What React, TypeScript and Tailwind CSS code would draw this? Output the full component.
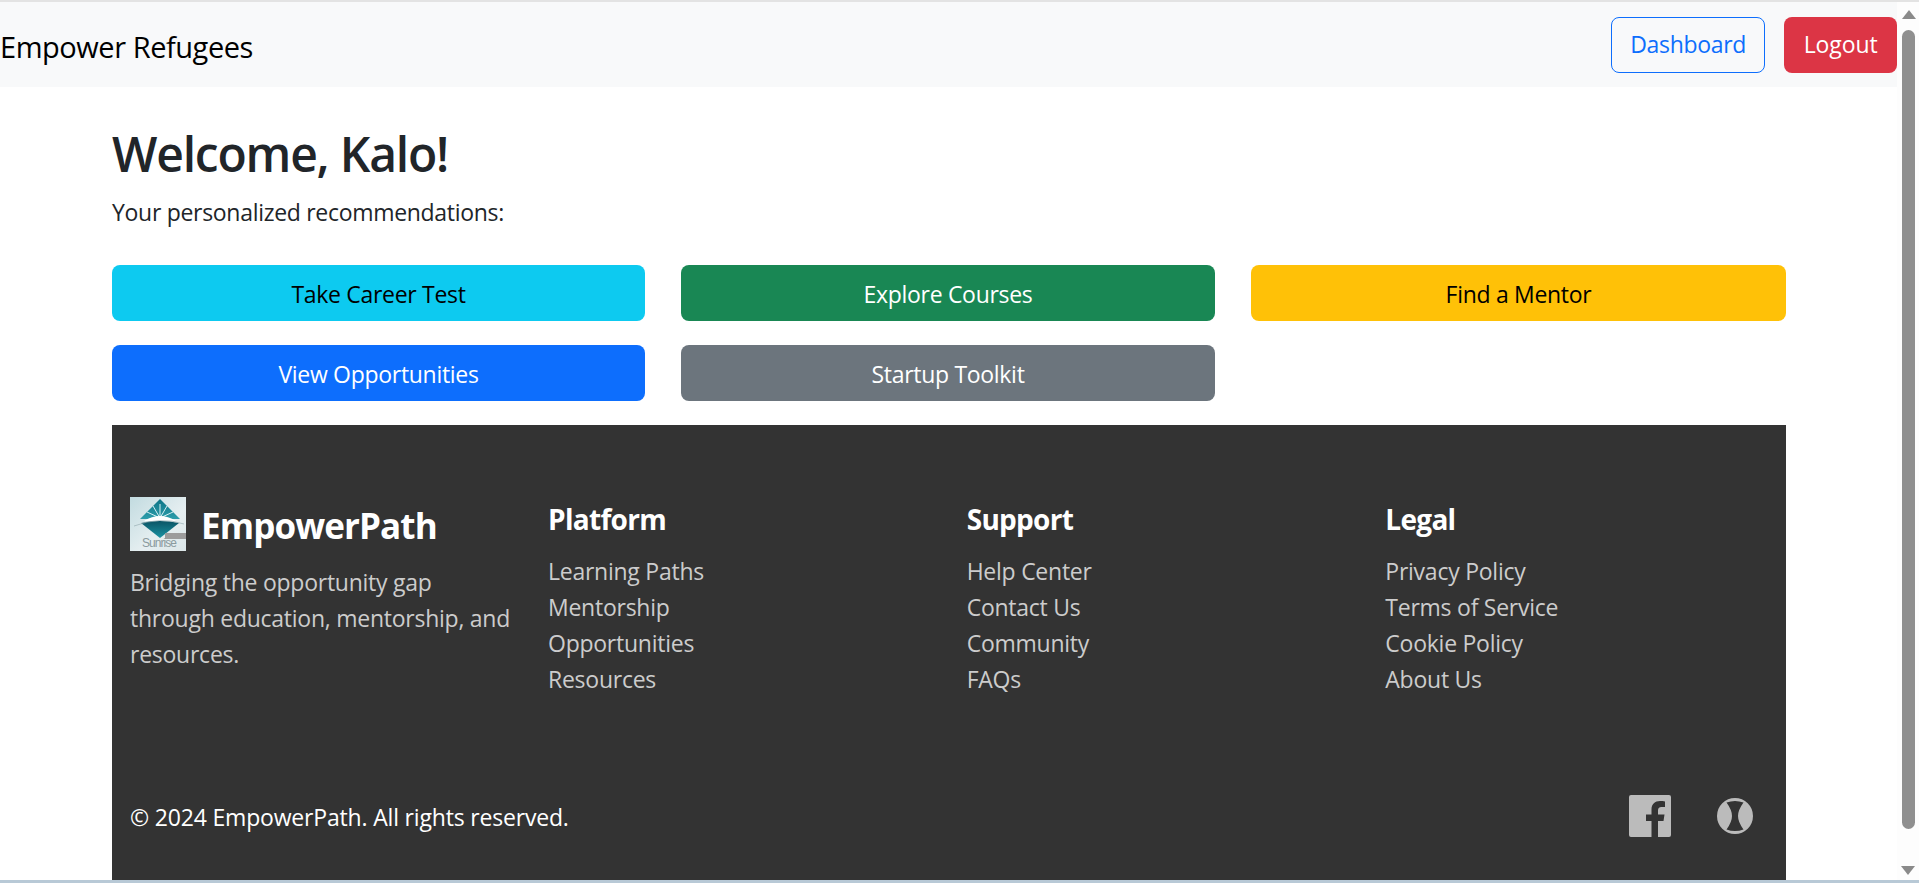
import React from 'react';

const font = { fontFamily: '"Open Sans", "Noto Sans", sans-serif' };

const footerColumns = [
  { title: 'Platform', links: ['Learning Paths', 'Mentorship', 'Opportunities', 'Resources'] },
  { title: 'Support', links: ['Help Center', 'Contact Us', 'Community', 'FAQs'] },
  { title: 'Legal', links: ['Privacy Policy', 'Terms of Service', 'Cookie Policy', 'About Us'] },
];

const actions = [
  { label: 'Take Career Test', cls: 'bg-[#0dcaf0] text-black' },
  { label: 'Explore Courses', cls: 'bg-[#198754] text-white' },
  { label: 'Find a Mentor', cls: 'bg-[#ffc107] text-black' },
  { label: 'View Opportunities', cls: 'bg-[#0d6efd] text-white' },
  { label: 'Startup Toolkit', cls: 'bg-[#6c757d] text-white' },
];

const Logo = () => (
  <svg width="56" height="54" viewBox="0 0 56 54" className="shrink-0">
    <defs>
      <linearGradient id="bg" x1="0" y1="0" x2="1" y2="1">
        <stop offset="0" stopColor="#c2dbe0" />
        <stop offset="0.6" stopColor="#e6eff1" />
        <stop offset="1" stopColor="#dbe6e8" />
      </linearGradient>
      <linearGradient id="top" x1="0" y1="0" x2="0" y2="1">
        <stop offset="0" stopColor="#0d7486" />
        <stop offset="1" stopColor="#2d9dab" />
      </linearGradient>
      <linearGradient id="bottom" x1="0" y1="0" x2="0" y2="1">
        <stop offset="0" stopColor="#0b5566" />
        <stop offset="1" stopColor="#1a93a3" />
      </linearGradient>
    </defs>
    <rect width="56" height="54" fill="url(#bg)" />
    <path d="M30 2 L50 22 L10 22 Z" fill="url(#top)" />
    <path d="M11 26 Q30 22 49 26 L30 41 Z" fill="url(#bottom)" />
    <path d="M30 21 L17 15 M30 21 L23 9 M30 21 L30 7 M30 21 L37 9 M30 21 L43 15" stroke="#d8f0f3" strokeWidth="1" />
    <path d="M14 24 Q30 14 46 24 Z" fill="#ffffff" />
    <path d="M4 29 Q30 19 54 27" stroke="#8fa6ab" strokeWidth="0.6" fill="none" />
    <rect x="35" y="36" width="21" height="6" fill="#9c9c9c" />
    <text x="12" y="50" fontSize="12" fontFamily="Liberation Sans, sans-serif" fill="#8a9a9e" textLength="35">
      Sunrise
    </text>
  </svg>
);

const App: React.FC = () => {
  return (
    <div className="relative flex h-[883px] w-full overflow-hidden bg-white" style={font}>
      <div className="flex min-w-0 flex-1 flex-col">
        <nav className="mt-[2px] flex h-[85px] items-center justify-between bg-[#f8f9fa]">
          <span className="pt-[4px] text-[29px] tracking-[-0.45px] text-black">Empower Refugees</span>
          <div className="flex gap-[19px]">
            <button className="h-[56px] rounded-[8px] border border-[#0d6efd] px-[18px] text-[23px] tracking-[-0.3px] text-[#0d6efd]">
              Dashboard
            </button>
            <button className="h-[56px] rounded-[8px] bg-[#dc3545] px-[19.5px] text-[23px] tracking-[-0.1px] text-white">
              Logout
            </button>
          </div>
        </nav>

        <main className="mr-[111px] ml-[112px] flex min-h-0 flex-1 flex-col">
          <h1 className="mt-[38px] text-[48px] leading-[58px] font-semibold tracking-[-1.2px] text-[#212529]">
            Welcome, Kalo!
          </h1>
          <p className="mt-[11px] text-[23px] leading-[36px] tracking-[-0.3px] text-[#212529]">
            Your personalized recommendations:
          </p>

          <div className="mt-[35px] grid grid-cols-[533px_534px_535px] gap-x-[36px] gap-y-[24px]">
            {actions.map((a) => (
              <button
                key={a.label}
                className={`h-[56px] rounded-[8px] pt-[3px] text-[23px] tracking-[-0.3px] ${a.cls}`}
              >
                {a.label}
              </button>
            ))}
          </div>

          <footer className="mt-[24px] flex flex-1 flex-col justify-between bg-[#333333] px-[18px] pt-[72px] pb-[44px]">
            <div className="grid grid-cols-[382px_1fr_1fr_1fr] gap-x-[36px]">
              <div>
                <div className="-mt-px flex items-center gap-[15px]">
                  <Logo />
                  <span className="pt-[4px] text-[35px] font-bold tracking-[-0.9px] text-white">EmpowerPath</span>
                </div>
                <p className="mt-[11px] text-[23px] leading-[36px] tracking-[-0.25px] text-[#cccccc]">
                  Bridging the opportunity gap through education, mentorship, and resources.
                </p>
              </div>
              {footerColumns.map((col) => (
                <div key={col.title}>
                  <h3 className="text-[28px] leading-[44px] font-bold tracking-[-0.7px] text-white">{col.title}</h3>
                  <ul className="mt-[12px]">
                    {col.links.map((l) => (
                      <li key={l} className="text-[23px] leading-[36px] tracking-[-0.25px] text-[#cccccc]">
                        {l}
                      </li>
                    ))}
                  </ul>
                </div>
              ))}
            </div>
            <div className="flex items-center justify-between pr-[15px]">
              <span className="text-[23px] tracking-[-0.18px] text-white">© 2024 EmpowerPath. All rights reserved.</span>
              <div className="mb-[2px] flex items-center gap-[46px]">
                <svg width="42" height="42" viewBox="0 0 42 42">
                  <path
                    fill="#bbbbbb"
                    d="M2 0h38a2 2 0 0 1 2 2v38a2 2 0 0 1-2 2H29V26h5.500l1-6.500H29v-4c0-2 1-3.500 3.500-3.500H36V6.500c-1.500-.2-3-.5-5-.5-5 0-8.500 3-8.500 8.500V19.500H17V26h5.500V42H2a2 2 0 0 1-2-2V2a2 2 0 0 1 2-2z"
                  />
                </svg>
                <svg width="36" height="36" viewBox="0 0 36 36">
                  <path
                    fill="#bbbbbb"
                    fillRule="evenodd"
                    d="M18 0a18 18 0 1 1 0 36a18 18 0 0 1 0-36zM9.500 4.500Q18 1.500 26.500 4.500Q21 12 21 18Q21 24 26.500 31.500Q18 34.500 9.500 31.500Q15 24 15 18Q15 12 9.500 4.500z"
                  />
                </svg>
              </div>
            </div>
          </footer>
        </main>
      </div>

      {/* classic window scrollbar from the screenshot */}
      <div className="flex w-[22px] shrink-0 flex-col items-center bg-[#fdfdfd] pl-px">
        <div className="mt-[10px] h-0 w-0 border-x-[7px] border-b-[9px] border-x-transparent border-b-[#8a8a8a]" />
        <div className="mt-[11px] h-[799px] w-[13px] rounded-full bg-[#8f8f8f]" />
      </div>
      <div className="absolute right-[4px] bottom-[8px] h-0 w-0 border-x-[7px] border-t-[9px] border-x-transparent border-t-[#8a8a8a]" />
      <div className="absolute top-0 right-0 left-0 h-[2px] bg-[#e3e3e3]" />
      <div className="absolute right-0 bottom-0 left-0 h-[3px] bg-[#b8c9d6]" />
    </div>
  );
};

export default App;
